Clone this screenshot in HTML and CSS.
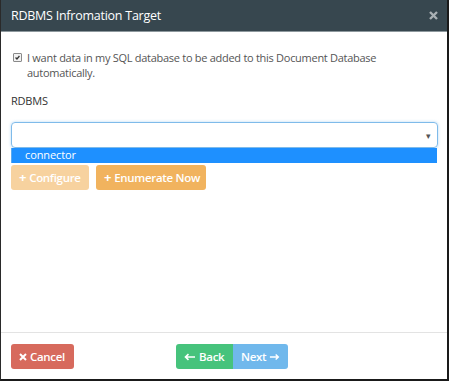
FILE: index.html
```html
<!DOCTYPE html>
<html>
<head>
<meta charset="utf-8">
<link rel="stylesheet" href="styles.css">
</head>
<body>
<div class="modal">
  <div class="header">
    <span class="title">RDBMS Infromation Target</span>
    <svg class="close" width="9" height="9" viewBox="0 0 9 9"><path d="M1 1L8 8M8 1L1 8" stroke="#a9b0b4" stroke-width="2.4" stroke-linecap="butt"/></svg>
  </div>
  <div class="body">
    <div class="check-row">
      <span class="checkbox"><svg width="9" height="9" viewBox="0 0 9 9"><path d="M2 4.5L3.8 6.4L7 2.6" fill="none" stroke="#333" stroke-width="1.6"/></svg></span>
      <span class="check-text">I want data in my SQL database to be added to this Document Database automatically.</span>
    </div>
    <div class="label">RDBMS</div>
    <div class="select-wrap">
      <div class="select"><span class="caret">▾</span></div>
      <div class="option">connector</div>
    </div>
    <div class="actions">
      <button class="btn btn-configure"><span class="plus">+</span> Configure</button>
      <button class="btn btn-enumerate"><span class="plus">+</span> Enumerate Now</button>
    </div>
  </div>
  <div class="footer">
    <button class="btn btn-cancel"><svg width="8" height="8" viewBox="0 0 8 8"><path d="M1 1L7 7M7 1L1 7" stroke="#fff" stroke-width="2"/></svg> Cancel</button>
    <div class="nav">
      <button class="btn btn-back"><svg width="12" height="8" viewBox="0 0 12 8"><path d="M11 4H2M4.5 1.2L1.5 4L4.5 6.8" fill="none" stroke="#fff" stroke-width="1.6"/></svg> Back</button>
      <button class="btn btn-next">Next <svg width="12" height="8" viewBox="0 0 12 8"><path d="M1 4H10M7.5 1.2L10.5 4L7.5 6.8" fill="none" stroke="#fff" stroke-width="1.6"/></svg></button>
    </div>
  </div>
</div>
</body>
</html>
```
FILE: styles.css
```css
* { box-sizing: border-box; }
html, body { margin: 0; padding: 0; background: #fff; }
body { font-family: "Open Sans", "Liberation Sans", sans-serif; }
.modal {
  width: 449px; height: 381px;
  border-left: 1px solid #2a2a2a;
  border-right: 2px solid #1a1a1a;
  border-bottom: 2px solid #1a1a1a;
  display: flex; flex-direction: column;
}
.header {
  height: 32px; flex: none;
  background: #37474f;
  border-bottom: 1px solid #8d989d;
  display: flex; align-items: center; justify-content: space-between;
  padding: 0 9px 0 10px;
}
.title { color: #fff; font-size: 12.5px; letter-spacing: -0.25px; }
.close { display: block; }
.body { flex: 1; padding: 18px 9px 0 10px; }
.check-row { display: flex; align-items: flex-start; }
.checkbox {
  width: 9px; height: 9px; margin: 3px 5px 0 2px;
  border: 1px solid #8a8a8a; border-radius: 1px; background: #f2f2f2;
  display: flex; align-items: center; justify-content: center; flex: none;
}
.checkbox svg { display: block; }
.check-text { font-size: 11px; color: #555; line-height: 15px; letter-spacing: -0.28px; }
.label { font-size: 11px; color: #333; margin-top: 13px; line-height: 15px; letter-spacing: -0.2px; }
.select-wrap { margin-top: 14px; }
.select {
  height: 26px; border: 1px solid #7fbbea; border-radius: 4px;
  box-shadow: 0 0 3px rgba(102,175,233,0.5);
  display: flex; align-items: center; justify-content: flex-end; padding-right: 6px;
}
.caret { font-size: 9px; color: #555; }
.option {
  height: 15px; background: #1e90ff; color: #fff; font-size: 11px; line-height: 14px;
  padding-left: 13px; margin-right: 1px; border-left: 1px solid #5aaaf0;
  letter-spacing: -0.1px;
}
.actions { display: flex; gap: 7px; margin-top: 2px; }
.btn {
  border: none; color: #fff; font-family: inherit; font-size: 11.5px; font-weight: 600;
  height: 25px; border-radius: 3px; padding: 0 8px; display: flex; align-items: center; gap: 3px;
  letter-spacing: -0.3px; white-space: nowrap;
}
.plus { font-weight: bold; font-size: 13px; line-height: 1; }
.btn-configure { background: #f7d29f; width: 78px; }
.btn-enumerate { background: #f1b35e; width: 110px; }
.footer {
  height: 47px; flex: none; border-top: 1px solid #e3e3e3;
  display: flex; align-items: center; padding: 1px 10px 0 10px;
}
.btn-cancel { background: #d76a5d; width: 63px; }
.nav { display: flex; margin-left: 102px; }
.btn-back { background: #46c37c; border-radius: 3px 0 0 3px; width: 57px; }
.btn-next { background: #70b8ec; border-radius: 0 3px 3px 0; width: 55px; }
```
